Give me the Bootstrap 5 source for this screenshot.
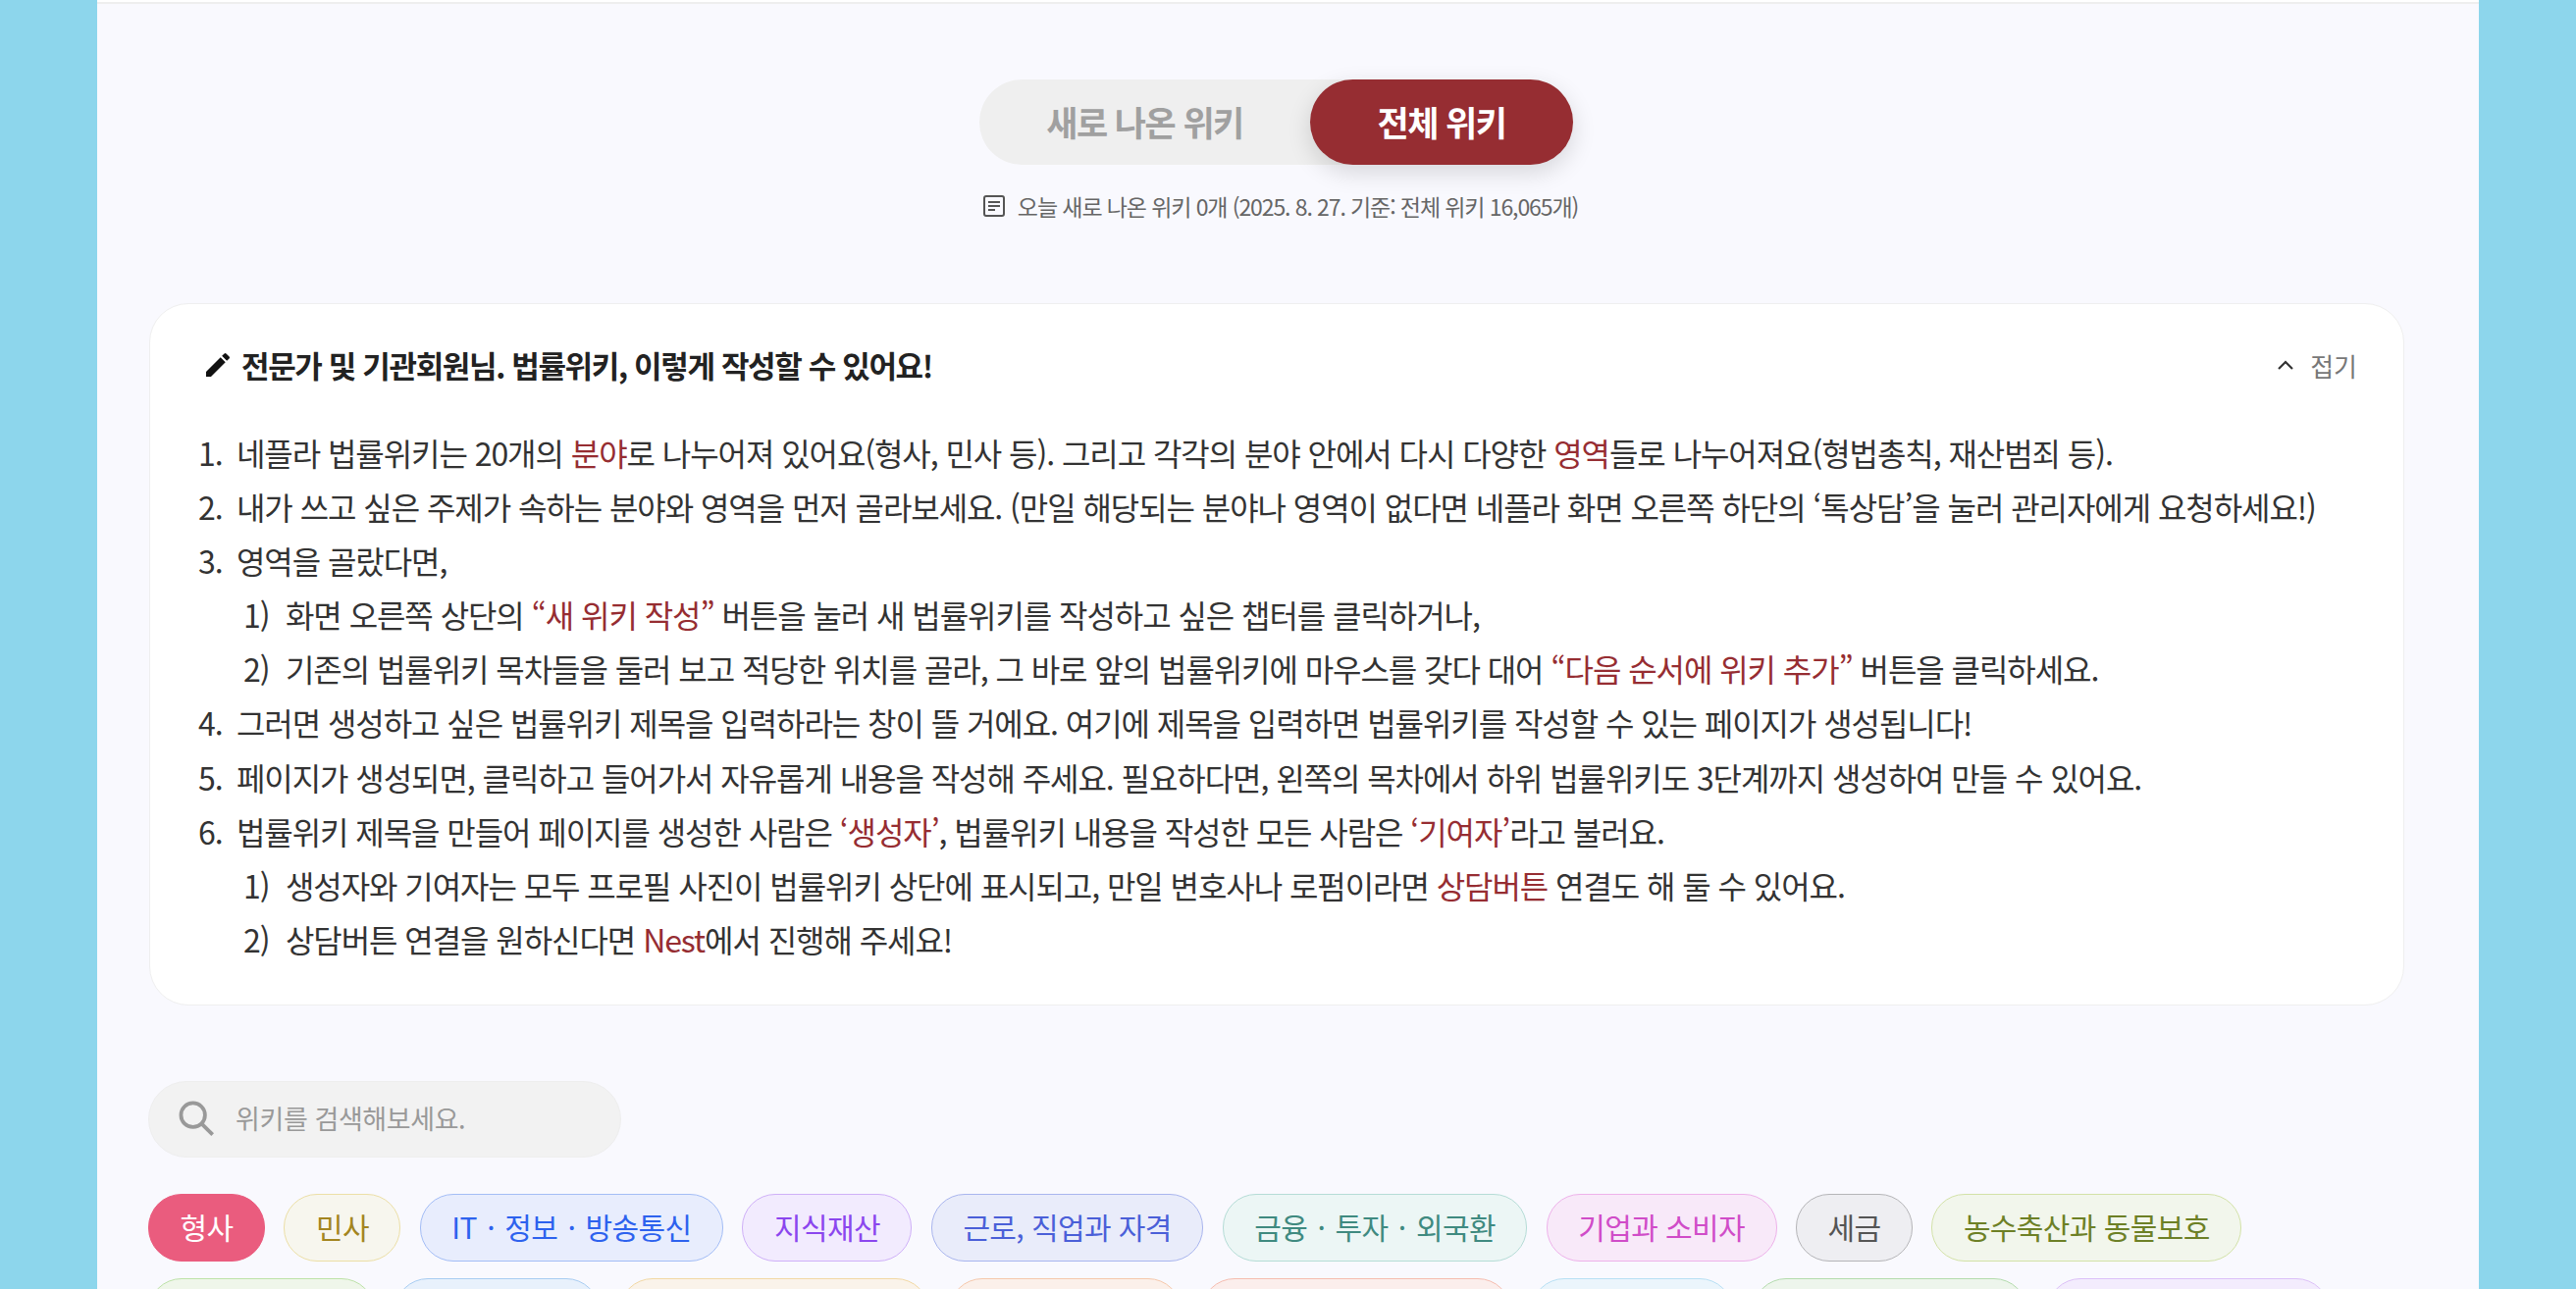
<!DOCTYPE html>
<html lang="ko">
<head>
<meta charset="utf-8">
<title>위키</title>
<link href="https://cdn.jsdelivr.net/npm/bootstrap@5.3.0/dist/css/bootstrap.min.css" rel="stylesheet">
<style>
html,body{height:100%;overflow:hidden}
body{background:#8dd6ec;font-family:"Noto Sans CJK KR","Noto Sans",sans-serif;color:#222}
.wiki-shell{margin:0 99px;height:1314px;background:#f9f9fe;overflow:hidden}
.top-rule{height:4px;border-bottom:2px solid #eee;background:#fff}
.mode-wrap{padding-right:24px}
.mode-switch{width:605px;height:87px;margin-top:77px;background:#efefef;border-radius:44px}
.mode-item{flex:1 1 0;border:0;background:transparent;border-radius:44px;font-size:35px;font-weight:700;letter-spacing:-1.55px;color:#a0a0a0;padding:0}
.mode-item.on{flex:0 0 268px;background:#962d32;color:#fff;box-shadow:0 8px 24px rgba(0,0,0,.14)}
.mode-note{margin:27px 0 0 8px;font-size:23px;line-height:30px;letter-spacing:-1.1px;color:#666;gap:12px}
.guide-box{margin:84px 76px 0 53px;height:716px;background:#fff;border:1px solid #efefef;border-radius:40px;padding:38px 47px 0 49px}
.guide-head{height:48px}
.guide-title{font-size:31px;font-weight:700;letter-spacing:-1.35px;color:#222}
.fold-link{font-size:26px;color:#777}
.guide-lines{margin:38px 0 0;padding:0;list-style:none;font-size:32px;line-height:55.1px;letter-spacing:-1.07px;color:#333}
.guide-lines li{white-space:nowrap}
.guide-lines .lv2{padding-left:46px}
.num{display:inline-block;width:39px}
.guide-lines .lv2 .num{width:43px}
.red{color:#962d32}
.search-box{width:482px;height:78px;margin:77px 0 0 52px;background:#f2f2f2;border:1px solid #eee;border-radius:39px;padding:0 0 2px 28px;font-size:27px;letter-spacing:-.4px;color:#999;gap:20px}
.chip-area{margin:37px 60px 0 52px}
.chip-row{height:68px;margin-bottom:18px;gap:19.4px}
.chip-row.wide{gap:20px}
.chip{height:69px;border-radius:34px;border:1.5px solid;font-size:30px;letter-spacing:-.6px;padding:0 31.5px 2px;white-space:nowrap}
.dot{margin:0 2.5px}
.c-rose{background:#ea5c7e;border-color:#ea5c7e;color:#fff}
.c-sand{background:#f7f6ee;border-color:#ecdfa6;color:#a38520}
.c-blue{background:#e8edfd;border-color:#a3bdf6;color:#2d62ee}
.c-violet{background:#f2ebfe;border-color:#cfb0f8;color:#8b46ee}
.c-indigo{background:#e9ecfa;border-color:#a9b5ee;color:#4a5fd8}
.c-teal{background:#ecf6f5;border-color:#b5dcd6;color:#3f8a80}
.c-pink{background:#f8e9f9;border-color:#eeb2ea;color:#d04cc8}
.c-gray{background:#eeeef2;border-color:#b5b5b8;color:#555}
.c-olive{background:#f2f6ec;border-color:#d3e2a8;color:#6d8026}
.r2a{width:231px;background:#eff6ea;border-color:#bde2a8}
.r2b{width:209px;background:#e8f1fc;border-color:#a8cdf2}
.r2c{width:316px;background:#faf3ea;border-color:#f2d8a4}
.r2d{width:237px;background:#fbf0ea;border-color:#f6c8ac}
.r2e{width:316px;background:#fbeeec;border-color:#f6bdb0}
.r2f{width:206px;background:#ebf5fc;border-color:#b8e0f4}
.r2g{width:280px;background:#edf5ec;border-color:#b4dcae}
.r2h{width:288px;background:#f3ecfd;border-color:#dcc0f8}
</style>
</head>
<body>
<div class="wiki-shell">
  <div class="top-rule"></div>
  <div class="mode-wrap d-flex flex-column align-items-center">
    <div class="mode-switch d-flex">
      <button type="button" class="mode-item">새로 나온 위키</button>
      <button type="button" class="mode-item on">전체 위키</button>
    </div>
    <div class="mode-note d-flex align-items-center">
      <svg width="24" height="24" viewBox="0 0 24 24" fill="none" stroke="#555" stroke-width="2"><rect x="2" y="2" width="20" height="20" rx="2"/><path d="M6 8h12M6 12h12M6 16h7"/></svg>
      <span>오늘 새로 나온 위키 0개 (2025. 8. 27. 기준: 전체 위키 16,065개)</span>
    </div>
  </div>
  <div class="guide-box">
    <div class="guide-head d-flex align-items-center justify-content-between">
      <div class="d-flex align-items-center gap-2">
        <svg class="ms-1" width="32" height="32" viewBox="0 0 24 24" fill="#111"><path d="M3 17.25V21h3.75L17.8 9.94l-3.75-3.75zM20.7 7.04a1 1 0 0 0 0-1.41l-2.34-2.34a1 1 0 0 0-1.41 0l-1.83 1.83 3.75 3.75z"/></svg>
        <span class="guide-title">전문가 및 기관회원님. 법률위키, 이렇게 작성할 수 있어요!</span>
      </div>
      <div class="fold-link d-flex align-items-center gap-3">
        <svg width="18" height="12" viewBox="0 0 18 12" fill="none" stroke="#333" stroke-width="2.2"><path d="M2 10l7-7 7 7"/></svg>
        <span>접기</span>
      </div>
    </div>
    <ol class="guide-lines">
      <li><span class="num">1.</span>네플라 법률위키는 20개의 <span class="red">분야</span>로 나누어져 있어요(형사, 민사 등). 그리고 각각의 분야 안에서 다시 다양한 <span class="red">영역</span>들로 나누어져요(형법총칙, 재산범죄 등).</li>
      <li><span class="num">2.</span>내가 쓰고 싶은 주제가 속하는 분야와 영역을 먼저 골라보세요. (만일 해당되는 분야나 영역이 없다면 네플라 화면 오른쪽 하단의 ‘톡상담’을 눌러 관리자에게 요청하세요!)</li>
      <li><span class="num">3.</span>영역을 골랐다면,</li>
      <li class="lv2"><span class="num">1)</span>화면 오른쪽 상단의 <span class="red">“새 위키 작성”</span> 버튼을 눌러 새 법률위키를 작성하고 싶은 챕터를 클릭하거나,</li>
      <li class="lv2"><span class="num">2)</span>기존의 법률위키 목차들을 둘러 보고 적당한 위치를 골라, 그 바로 앞의 법률위키에 마우스를 갖다 대어 <span class="red">“다음 순서에 위키 추가”</span> 버튼을 클릭하세요.</li>
      <li><span class="num">4.</span>그러면 생성하고 싶은 법률위키 제목을 입력하라는 창이 뜰 거에요. 여기에 제목을 입력하면 법률위키를 작성할 수 있는 페이지가 생성됩니다!</li>
      <li><span class="num">5.</span>페이지가 생성되면, 클릭하고 들어가서 자유롭게 내용을 작성해 주세요. 필요하다면, 왼쪽의 목차에서 하위 법률위키도 3단계까지 생성하여 만들 수 있어요.</li>
      <li><span class="num">6.</span>법률위키 제목을 만들어 페이지를 생성한 사람은 <span class="red">‘생성자’</span>, 법률위키 내용을 작성한 모든 사람은 <span class="red">‘기여자’</span>라고 불러요.</li>
      <li class="lv2"><span class="num">1)</span>생성자와 기여자는 모두 프로필 사진이 법률위키 상단에 표시되고, 만일 변호사나 로펌이라면 <span class="red">상담버튼</span> 연결도 해 둘 수 있어요.</li>
      <li class="lv2"><span class="num">2)</span>상담버튼 연결을 원하신다면 <span class="red">Nest</span>에서 진행해 주세요!</li>
    </ol>
  </div>
  <div class="search-box d-flex align-items-center">
    <svg width="40" height="40" viewBox="0 0 36 36" fill="none" stroke="#999" stroke-width="3.4"><circle cx="15" cy="15" r="11"/><path d="M23 23l10 10"/></svg>
    <span>위키를 검색해보세요.</span>
  </div>
  <div class="chip-area">
    <div class="chip-row d-flex">
      <div class="chip c-rose d-flex align-items-center">형사</div>
      <div class="chip c-sand d-flex align-items-center">민사</div>
      <div class="chip c-blue d-flex align-items-center">IT <span class="dot">&nbsp;·&nbsp;</span> 정보 <span class="dot">&nbsp;·&nbsp;</span> 방송통신</div>
      <div class="chip c-violet d-flex align-items-center">지식재산</div>
      <div class="chip c-indigo d-flex align-items-center">근로, 직업과 자격</div>
      <div class="chip c-teal d-flex align-items-center">금융 <span class="dot">&nbsp;·&nbsp;</span> 투자 <span class="dot">&nbsp;·&nbsp;</span> 외국환</div>
      <div class="chip c-pink d-flex align-items-center">기업과 소비자</div>
      <div class="chip c-gray d-flex align-items-center">세금</div>
      <div class="chip c-olive d-flex align-items-center">농수축산과 동물보호</div>
    </div>
    <div class="chip-row wide d-flex">
      <div class="chip r2a"></div>
      <div class="chip r2b"></div>
      <div class="chip r2c"></div>
      <div class="chip r2d"></div>
      <div class="chip r2e"></div>
      <div class="chip r2f"></div>
      <div class="chip r2g"></div>
      <div class="chip r2h"></div>
    </div>
  </div>
</div>
</body>
</html>
